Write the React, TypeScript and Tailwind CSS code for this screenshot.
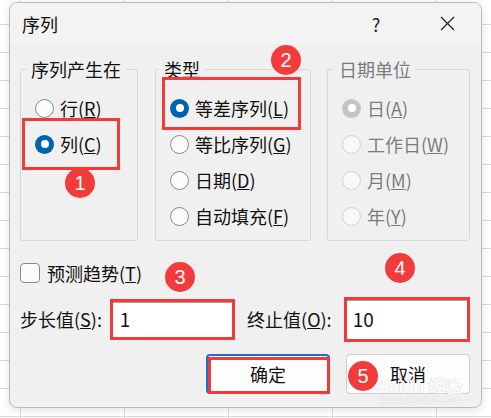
import React from "react";

const font = "font-['Noto_Sans_CJK_SC',sans-serif]";

function Radio({ checked, disabled }: { checked?: boolean; disabled?: boolean }) {
    if (checked) {
        return (
            <span
                className={`flex h-[19px] w-[19px] shrink-0 items-center justify-center rounded-full ${
                    disabled ? "bg-[#c4c4c4]" : "bg-[#0063b1]"
                }`}
            >
                <span className="h-[8px] w-[8px] rounded-full bg-white" />
            </span>
        );
    }
    return (
        <span
            className={`h-[19px] w-[19px] shrink-0 rounded-full border ${
                disabled ? "border-[#d2d2d2] bg-[#f8f8f8]" : "border-[#8a8a8a] bg-[#fbfbfb]"
            }`}
        />
    );
}

function Option({
    label,
    mnemonic,
    checked,
    disabled,
    box,
}: {
    label: string;
    mnemonic: string;
    checked?: boolean;
    disabled?: boolean;
    box?: string;
}) {
    return (
        <div className="relative flex h-[36px] items-center gap-[6px] pl-[14px]">
            <Radio checked={checked} disabled={disabled} />
            <span className={`text-[18px] leading-[22px] ${disabled ? "text-[#7c7c7c]" : "text-[#111]"}`}>
                {label}(<u>{mnemonic}</u>)
            </span>
            {box && <span className={`absolute border-[3px] border-[#f23a3a] ${box}`} />}
        </div>
    );
}

function Badge({ n, className }: { n: number; className: string }) {
    return (
        <span
            className={`absolute flex h-[30px] w-[30px] items-center justify-center rounded-full bg-[#f23b3b] font-['Liberation_Sans',sans-serif] text-[20px] leading-none text-white ${className}`}
        >
            {n}
        </span>
    );
}

export default function App() {
    return (
        <div
            className={`relative h-[418px] w-[491px] overflow-hidden bg-white bg-[linear-gradient(to_right,#dadada_1px,transparent_1px),linear-gradient(to_bottom,#dadada_1px,transparent_1px)] bg-[size:104px_28px] bg-[position:20px_24px] pl-[9px] pt-[2px] ${font}`}
        >
            <div className="flex h-[406px] w-[473px] flex-col overflow-hidden rounded-[8px] border border-[#bcbcbc] bg-[#f0f0f0] shadow-[0_2px_8px_rgba(0,0,0,0.12)]">
                {/* title bar */}
                <div className="flex h-[41px] shrink-0 items-center bg-[#f3f3f3] pl-[12px] pr-[11px]">
                    <span className="text-[18px] leading-[22px] text-[#111]">序列</span>
                    <div className="ml-auto flex items-center gap-[25px]">
                        <span className="w-[46px] text-center text-[18px] leading-[22px] text-[#222]">?</span>
                        <span className="flex w-[46px] justify-center">
                            <svg width="15" height="15" viewBox="0 0 15 15">
                                <path d="M1 1L14 14M14 1L1 14" stroke="#1f1f1f" strokeWidth="1.2" />
                            </svg>
                        </span>
                    </div>
                </div>

                {/* body */}
                <div className="flex flex-1 flex-col pl-[10px] pr-[11px] pt-[14px]">
                    <div className="flex">
                        <fieldset className="h-[183px] w-[118px] rounded-[2px] border border-[#d9d9d9]">
                            <legend className="ml-[5px] px-[5px] text-[18px] leading-[22px] text-[#111]">序列产生在</legend>
                            <div className="pt-[10px]">
                                <Option label="行" mnemonic="R" />
                                <Option
                                    label="列"
                                    mnemonic="C"
                                    checked
                                    box="left-[1px] -top-[8px] -bottom-[8px] w-[98px]"
                                />
                            </div>
                        </fieldset>
                        <fieldset className="ml-[17px] h-[183px] w-[156px] rounded-[2px] border border-[#d9d9d9]">
                            <legend className="ml-[3px] px-[5px] text-[18px] leading-[22px] text-[#111]">类型</legend>
                            <div className="pt-[10px]">
                                <Option
                                    label="等差序列"
                                    mnemonic="L"
                                    checked
                                    box="left-[6px] -top-[13px] -bottom-[4px] w-[139px]"
                                />
                                <Option label="等比序列" mnemonic="G" />
                                <Option label="日期" mnemonic="D" />
                                <Option label="自动填充" mnemonic="F" />
                            </div>
                        </fieldset>
                        <fieldset className="ml-[16px] h-[183px] w-[143px] rounded-[2px] border border-[#d9d9d9]">
                            <legend className="ml-[6px] px-[5px] text-[18px] leading-[22px] text-[#7c7c7c]">日期单位</legend>
                            <div className="pt-[10px]">
                                <Option label="日" mnemonic="A" checked disabled />
                                <Option label="工作日" mnemonic="W" disabled />
                                <Option label="月" mnemonic="M" disabled />
                                <Option label="年" mnemonic="Y" disabled />
                            </div>
                        </fieldset>
                    </div>

                    {/* trend checkbox */}
                    <div className="mt-[22px] flex h-[20px] items-center gap-[7px]">
                        <span className="h-[20px] w-[20px] rounded-[4px] border border-[#8a8a8a] bg-[#fbfbfb]" />
                        <span className="text-[18px] leading-[22px] text-[#111]">
                            预测趋势(<u>T</u>)
                        </span>
                    </div>

                    {/* step / stop */}
                    <div className="mt-[13px] flex h-[46px] items-center">
                        <span className="w-[91px] text-[18px] leading-[22px] text-[#111]">
                            步长值(<u>S</u>):
                        </span>
                        <div className="h-[41px] w-[127px] border-[3px] border-[#f23a3a]">
                            <div className="flex h-full items-center border-t border-[#a0a0a0] bg-white pl-[7px] text-[19px] text-[#111]">
                                1
                            </div>
                        </div>
                        <span className="ml-[12px] w-[98px] text-[18px] leading-[22px] text-[#111]">
                            终止值(<u>O</u>):
                        </span>
                        <div className="h-[45px] w-[128px] border-[3px] border-[#f23a3a]">
                            <div className="flex h-full items-center border-t border-[#a0a0a0] bg-white pl-[6px] text-[19px] text-[#111]">
                                10
                            </div>
                        </div>
                    </div>

                    {/* buttons */}
                    <div className="mt-[12px] flex h-[40px] justify-end gap-[16px]">
                        <div className="relative w-[124px] rounded-[4px] border-2 border-[#1a73c8] bg-[#fdfdfd]">
                            <span className="absolute -bottom-[2px] -right-[2px] left-0 top-[1px] border-[3px] border-[#f23a3a]" />
                            <span className="flex h-full items-center justify-center text-[18px] text-[#111]">确定</span>
                        </div>
                        <div className="relative flex w-[124px] items-center justify-center rounded-[4px] border border-[#cfcfcf] bg-[#fdfdfd] text-[18px] text-[#111]">
                            取消
                            {/* faint watermark */}
                            <span className="absolute bottom-[-12px] left-[30px] flex flex-col items-center font-['Liberation_Sans',sans-serif] leading-none text-white [text-shadow:0_0_1px_#b8b8b8]">
                                <span className="text-[17px] font-bold">Baidu 经验</span>
                                <span className="text-[10px]">jingyan.baidu.com</span>
                            </span>
                        </div>
                    </div>
                </div>
            </div>

            <Badge n={1} className="left-[65px] top-[168px]" />
            <Badge n={2} className="left-[271px] top-[45px]" />
            <Badge n={3} className="left-[165px] top-[262px]" />
            <Badge n={4} className="left-[385px] top-[253px]" />
            <Badge n={5} className="left-[348px] top-[361px]" />
        </div>
    );
}
